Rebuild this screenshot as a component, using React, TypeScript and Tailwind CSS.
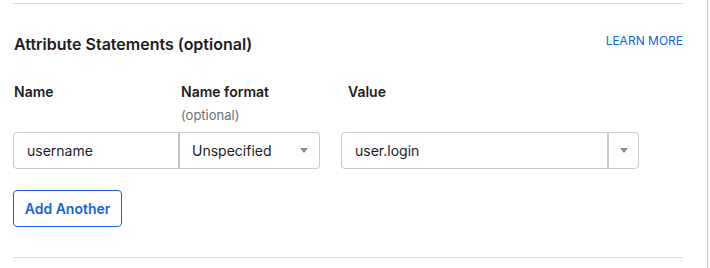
import React from "react";

function Caret() {
  return (
    <svg width="8" height="5" viewBox="0 0 8 5" className="block">
      <path d="M0 0h8L4 5z" fill="#8a8a92" />
    </svg>
  );
}

export default function App() {
  return (
    <div
      className="w-[710px] h-[268px] bg-white flex text-[#1d1d21]"
      style={{ fontFamily: "Inter, 'Liberation Sans', sans-serif" }}
    >
      <div className="w-[708px] h-full border-r border-[#c6c6cc] pl-[13px] pr-[24px] pt-[3px] flex flex-col">
        <div className="border-t border-[#dcdce0]" />
        <div className="flex justify-between items-center mt-[29px] pl-[1px]">
          <h2 className="text-[16px] leading-[22px] font-semibold">Attribute Statements (optional)</h2>
          <a className="text-[12px] leading-[16px] text-[#1662dd] -mt-[6px]">LEARN MORE</a>
        </div>
        <div className="flex mt-[27px] pl-[1px] text-[14px] leading-[19px] font-semibold">
          <div className="w-[167px]">Name</div>
          <div className="w-[167px]">
            <div>Name format</div>
            <div className="font-normal text-[13px] text-[#6e6e78] mt-[5px]">(optional)</div>
          </div>
          <div>Value</div>
        </div>
        <div className="flex mt-[7px] h-[37px] text-[14px]">
          <div className="w-[166px] border border-[#c9c9ce] rounded-l-[4px] flex items-center pl-[13px]">username</div>
          <div className="w-[142px] border border-l-2 border-[#c9c9ce] border-l-[#c4c4ca] rounded-r-[4px] flex items-center justify-between pl-[12px] pr-[11px] -ml-[1px]">
            <span>Unspecified</span>
            <Caret />
          </div>
          <div className="w-[298px] ml-[21px] border border-[#c9c9ce] rounded-[4px] flex">
            <div className="flex-1 flex items-center pl-[13px] border-r-2 border-[#c9c9ce]">user.login</div>
            <div className="w-[29px] flex items-center justify-center">
              <Caret />
            </div>
          </div>
        </div>
        <div className="mt-[21px]">
          <button className="w-[109px] h-[37px] border border-[#1662dd] rounded-[4px] text-[#1662dd] text-[14px] font-semibold">
            Add Another
          </button>
        </div>
        <div className="border-t border-[#dcdce0] mt-[30px]" />
      </div>
    </div>
  );
}
